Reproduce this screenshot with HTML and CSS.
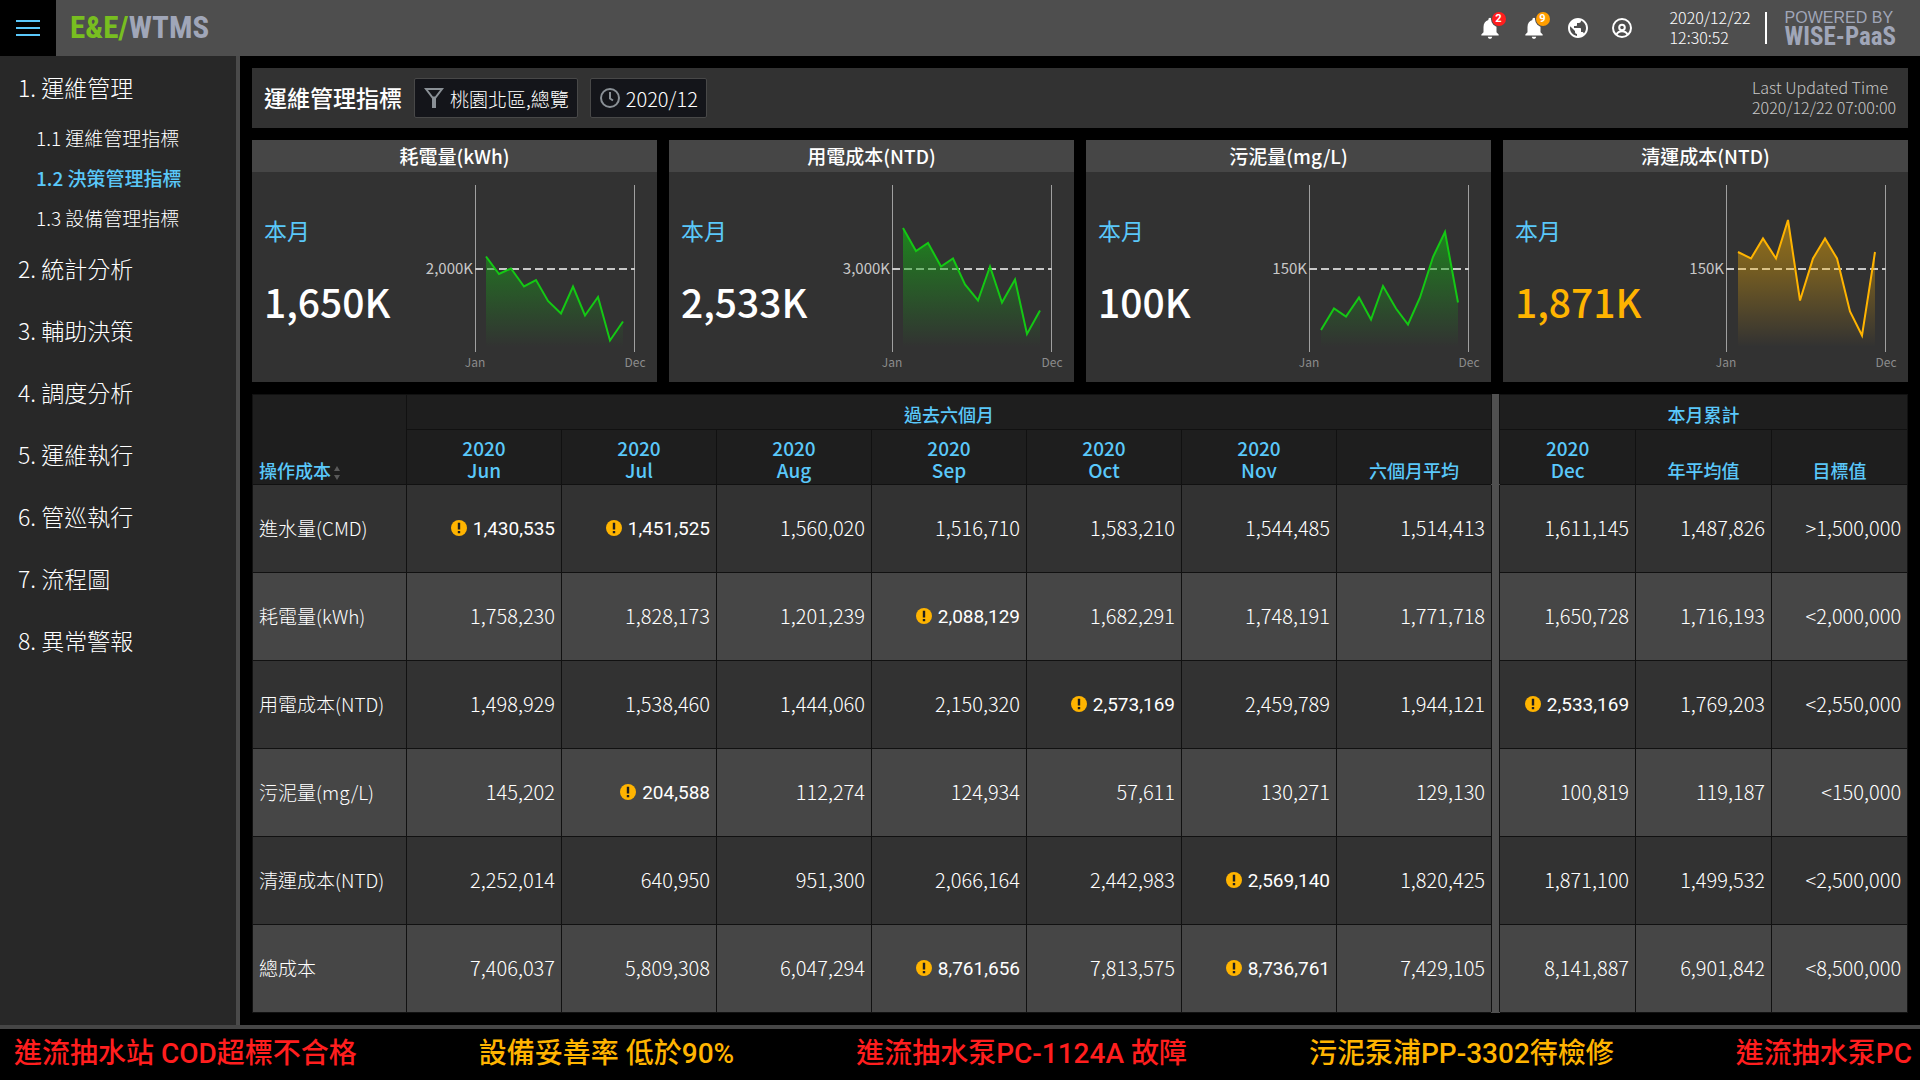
FILE: index.html
```html
<!DOCTYPE html>
<html lang="zh-Hant">
<head>
<meta charset="utf-8">
<meta name="viewport" content="width=device-width, initial-scale=1">
<title>E&amp;E/WTMS 運維管理指標</title>
<link rel="stylesheet" href="styles.css">
</head>
<body>
<svg class="defs" aria-hidden="true">
  <defs>
    <linearGradient id="fill-green" gradientUnits="userSpaceOnUse" x1="0" y1="50" x2="0" y2="175"><stop offset="0" stop-color="#17a317" stop-opacity=".8"/><stop offset=".3" stop-color="#17a317" stop-opacity=".52"/><stop offset="1" stop-color="#17a317" stop-opacity="0"/></linearGradient>
    <linearGradient id="fill-amber" gradientUnits="userSpaceOnUse" x1="0" y1="45" x2="0" y2="175"><stop offset="0" stop-color="#ffb400" stop-opacity=".5"/><stop offset=".4" stop-color="#ffb400" stop-opacity=".33"/><stop offset="1" stop-color="#ffb400" stop-opacity="0"/></linearGradient>
    <symbol id="bell" viewBox="0 0 24 24"><path d="M12 22c1.1 0 2-.9 2-2h-4c0 1.1.89 2 2 2zm6-6v-5c0-3.07-1.64-5.64-4.5-6.32V4c0-.83-.67-1.5-1.5-1.5s-1.5.67-1.5 1.5v.68C7.63 5.36 6 7.92 6 11v5l-2 2v1h16v-1l-2-2z"/></symbol>
    <symbol id="warn" viewBox="0 0 16 16"><circle cx="8" cy="8" r="8" fill="#ffb400"/><path d="M6.8 2.8h2.4v6.6H6.8zM6.8 11h2.4v2.2H6.8z" fill="#1e1e1e"/></symbol>
  </defs>
</svg>

<header class="topbar">
  <button class="menu-button" type="button" aria-label="Menu"><svg width="24" height="16" viewBox="0 0 24 16"><path d="M0 1h24M0 8h24M0 15h24" stroke="#5ac8fa" stroke-width="2"/></svg></button>
  <a class="brand" href="#"><span class="brand-green">E&amp;E/</span>WTMS</a>
  <div class="tools">
    <button class="tool" type="button" aria-label="Alarms"><svg width="26" height="26"><use href="#bell"/></svg><span class="badge badge-red">2</span></button>
    <button class="tool" type="button" aria-label="Warnings"><svg width="26" height="26"><use href="#bell"/></svg><span class="badge badge-amber">9</span></button>
    <button class="tool" type="button" aria-label="Language"><svg width="24" height="24" viewBox="0 0 24 24"><path d="M12 2C6.480 2 2 6.480 2 12s4.480 10 10 10 10-4.480 10-10S17.520 2 12 2zm-1 17.930c-3.950-.49-7-3.850-7-7.930 0-.62.08-1.210.21-1.790L9 15v1c0 1.100.9 2 2 2v1.930zm6.900-2.540c-.26-.81-1-1.390-1.900-1.390h-1v-3c0-.55-.45-1-1-1H8v-2h2c.55 0 1-.45 1-1V7h2c1.100 0 2-.9 2-2v-.41c2.930 1.190 5 4.060 5 7.410 0 2.080-.8 3.970-2.100 5.390z"/></svg></button>
    <button class="tool" type="button" aria-label="Account"><svg width="24" height="24" viewBox="0 0 24 24"><g fill="none" stroke="#fff" stroke-width="2"><circle cx="12" cy="12" r="9"/><circle cx="12" cy="11.500" r="2.800"/><path d="M6.500 18.500c1-2.300 3-3.300 5.500-3.300s4.500 1 5.500 3.300"/></g></svg></button>
  </div>
  <time class="clock">2020/12/22<br>12:30:52</time>
  <div class="powered"><span class="powered-by">POWERED BY</span><span class="powered-name">WISE-PaaS</span></div>
</header>

<div class="layout">
  <nav class="sidebar">
    <ul class="nav">
      <li><a href="#">1. 運維管理</a>
        <ul class="subnav">
          <li><a href="#">1.1 運維管理指標</a></li>
          <li><a class="active" href="#">1.2 決策管理指標</a></li>
          <li><a href="#">1.3 設備管理指標</a></li>
        </ul>
      </li>
      <li><a href="#">2. 統計分析</a></li>
      <li><a href="#">3. 輔助決策</a></li>
      <li><a href="#">4. 調度分析</a></li>
      <li><a href="#">5. 運維執行</a></li>
      <li><a href="#">6. 管巡執行</a></li>
      <li><a href="#">7. 流程圖</a></li>
      <li><a href="#">8. 異常警報</a></li>
    </ul>
  </nav>

  <main class="content">
    <section class="toolbar">
      <h1>運維管理指標</h1>
      <button class="filter" type="button"><svg width="20" height="20" viewBox="0 0 20 20"><path d="M2 1h16L11.500 9.500h-3z" fill="none" stroke="#8a9096" stroke-width="2"/><path d="M8 9h4v11H8z" fill="#8a9096"/></svg>桃園北區,總覽</button>
      <button class="filter filter-date" type="button"><svg width="20" height="20" viewBox="0 0 20 20" fill="none" stroke="#8a9096" stroke-width="2"><circle cx="10" cy="10" r="9"/><path d="M10 4v6.500l3 2"/></svg>2020/12</button>
      <p class="updated">Last Updated Time<br>2020/12/22 07:00:00</p>
    </section>

    <section class="cards">
      <article class="card">
        <h2>耗電量(kWh)</h2>
        <div class="card-body">
          <div class="figure"><span class="figure-label">本月</span><strong class="figure-value">1,650K</strong></div>
          <svg class="chart" viewBox="0 0 245 210">
            <path class="axis" d="M63.500 13v167M222.500 13v167"/><path class="limit" d="M63 97h160"/>
            <path fill="url(#fill-green)" d="M74 175V84.500L87 102L99 96.500L112 114.500L124 108L136 129L149 141.500L161 114.500L173 143.500L186 125L198 168.500L211 149.500V175z"/>
            <polyline class="line" points="74,84.500 87,102 99,96.500 112,114.500 124,108 136,129 149,141.500 161,114.500 173,143.500 186,125 198,168.500 211,149.500"/>
            <text class="limit-label" x="61" y="102">2,000K</text><text class="month" x="63" y="195">Jan</text><text class="month" x="223" y="195">Dec</text>
          </svg>
        </div>
      </article>
      <article class="card">
        <h2>用電成本(NTD)</h2>
        <div class="card-body">
          <div class="figure"><span class="figure-label">本月</span><strong class="figure-value">2,533K</strong></div>
          <svg class="chart" viewBox="0 0 245 210">
            <path class="axis" d="M63.500 13v167M222.500 13v167"/><path class="limit" d="M63 97h160"/>
            <path fill="url(#fill-green)" d="M74 175V56L87 79L99 71L112 94.500L124 86.500L136 112.500L149 128.500L161 94.500L173 130.500L186 107.500L198 162L211 138.500V175z"/>
            <polyline class="line" points="74,56 87,79 99,71 112,94.500 124,86.500 136,112.500 149,128.500 161,94.500 173,130.500 186,107.500 198,162 211,138.500"/>
            <text class="limit-label" x="61" y="102">3,000K</text><text class="month" x="63" y="195">Jan</text><text class="month" x="223" y="195">Dec</text>
          </svg>
        </div>
      </article>
      <article class="card">
        <h2>污泥量(mg/L)</h2>
        <div class="card-body">
          <div class="figure"><span class="figure-label">本月</span><strong class="figure-value">100K</strong></div>
          <svg class="chart" viewBox="0 0 245 210">
            <path class="axis" d="M63.500 13v167M222.500 13v167"/><path class="limit" d="M63 97h160"/>
            <path fill="url(#fill-green)" d="M75 175V158L88 136.500L100 144.500L113 125.500L125 147.500L137 114L150 136.500L162 152.500L174 125.500L187 85L199 60L212 130.500V175z"/>
            <polyline class="line" points="75,158 88,136.500 100,144.500 113,125.500 125,147.500 137,114 150,136.500 162,152.500 174,125.500 187,85 199,60 212,130.500"/>
            <text class="limit-label" x="61" y="102">150K</text><text class="month" x="63" y="195">Jan</text><text class="month" x="223" y="195">Dec</text>
          </svg>
        </div>
      </article>
      <article class="card card-warn">
        <h2>清運成本(NTD)</h2>
        <div class="card-body">
          <div class="figure"><span class="figure-label">本月</span><strong class="figure-value">1,871K</strong></div>
          <svg class="chart" viewBox="0 0 245 210">
            <path class="axis" d="M63.500 13v167M222.500 13v167"/><path class="limit" d="M63 97h160"/>
            <path fill="url(#fill-amber)" d="M75 175V80L88 86.500L100 66.500L113 86.500L125 48L137 128.500L150 86.500L162 66.500L174 86.500L187 139.500L199 163.500L212 80V175z"/>
            <polyline class="line" points="75,80 88,86.500 100,66.500 113,86.500 125,48 137,128.500 150,86.500 162,66.500 174,86.500 187,139.500 199,163.500 212,80"/>
            <text class="limit-label" x="61" y="102">150K</text><text class="month" x="63" y="195">Jan</text><text class="month" x="223" y="195">Dec</text>
          </svg>
        </div>
      </article>
    </section>

    <table class="costs">
      <colgroup><col class="col-name"><col class="col-month" span="7"><col class="col-gap"><col class="col-total" span="3"></colgroup>
      <thead>
        <tr class="groups"><th class="name" rowspan="2" scope="col">操作成本<svg class="sort" width="6" height="14" viewBox="0 0 6 14"><path d="M3 0l3 5H0zM3 14l3-5H0z" fill="#5a5a5a"/></svg></th><th colspan="7" scope="colgroup">過去六個月</th><td class="gap" rowspan="2"></td><th colspan="3" scope="colgroup">本月累計</th></tr>
        <tr class="months"><th class="date" scope="col">2020<br>Jun</th><th class="date" scope="col">2020<br>Jul</th><th class="date" scope="col">2020<br>Aug</th><th class="date" scope="col">2020<br>Sep</th><th class="date" scope="col">2020<br>Oct</th><th class="date" scope="col">2020<br>Nov</th><th scope="col">六個月平均</th><th class="date" scope="col">2020<br>Dec</th><th scope="col">年平均值</th><th scope="col">目標值</th></tr>
      </thead>
      <tbody>
        <tr class="row"><th scope="row">進水量(CMD)</th><td class="over"><svg class="warn"><use href="#warn"/></svg>1,430,535</td><td class="over"><svg class="warn"><use href="#warn"/></svg>1,451,525</td><td>1,560,020</td><td>1,516,710</td><td>1,583,210</td><td>1,544,485</td><td>1,514,413</td><td class="gap" rowspan="6"></td><td>1,611,145</td><td>1,487,826</td><td>&gt;1,500,000</td></tr>
        <tr class="row alt"><th scope="row">耗電量(kWh)</th><td>1,758,230</td><td>1,828,173</td><td>1,201,239</td><td class="over"><svg class="warn"><use href="#warn"/></svg>2,088,129</td><td>1,682,291</td><td>1,748,191</td><td>1,771,718</td><td>1,650,728</td><td>1,716,193</td><td>&lt;2,000,000</td></tr>
        <tr class="row"><th scope="row">用電成本(NTD)</th><td>1,498,929</td><td>1,538,460</td><td>1,444,060</td><td>2,150,320</td><td class="over"><svg class="warn"><use href="#warn"/></svg>2,573,169</td><td>2,459,789</td><td>1,944,121</td><td class="over"><svg class="warn"><use href="#warn"/></svg>2,533,169</td><td>1,769,203</td><td>&lt;2,550,000</td></tr>
        <tr class="row alt"><th scope="row">污泥量(mg/L)</th><td>145,202</td><td class="over"><svg class="warn"><use href="#warn"/></svg>204,588</td><td>112,274</td><td>124,934</td><td>57,611</td><td>130,271</td><td>129,130</td><td>100,819</td><td>119,187</td><td>&lt;150,000</td></tr>
        <tr class="row"><th scope="row">清運成本(NTD)</th><td>2,252,014</td><td>640,950</td><td>951,300</td><td>2,066,164</td><td>2,442,983</td><td class="over"><svg class="warn"><use href="#warn"/></svg>2,569,140</td><td>1,820,425</td><td>1,871,100</td><td>1,499,532</td><td>&lt;2,500,000</td></tr>
        <tr class="row alt"><th scope="row">總成本</th><td>7,406,037</td><td>5,809,308</td><td>6,047,294</td><td class="over"><svg class="warn"><use href="#warn"/></svg>8,761,656</td><td>7,813,575</td><td class="over"><svg class="warn"><use href="#warn"/></svg>8,736,761</td><td>7,429,105</td><td>8,141,887</td><td>6,901,842</td><td>&lt;8,500,000</td></tr>
      </tbody>
    </table>
  </main>
</div>

<footer class="ticker">
  <span class="alarm">進流抽水站 COD超標不合格</span>
  <span class="caution">設備妥善率 低於90%</span>
  <span class="alarm">進流抽水泵PC-1124A 故障</span>
  <span class="caution">污泥泵浦PP-3302待檢修</span>
  <span class="alarm">進流抽水泵PC</span>
</footer>
</body>
</html>
```
FILE: styles.css
```css
* { box-sizing: border-box; }
body {
  margin: 0;
  min-height: 100vh;
  display: flex;
  flex-direction: column;
  background: #000;
  color: #fff;
  font-family: "Noto Sans CJK TC", sans-serif;
  font-weight: 300;
}
a { color: inherit; text-decoration: none; }
button { font: inherit; color: inherit; border: 0; padding: 0; background: none; cursor: pointer; }
ul { list-style: none; margin: 0; padding: 0; }
svg { display: block; flex: none; }
.defs { position: absolute; width: 0; height: 0; }

.topbar { display: flex; align-items: center; height: 56px; padding-right: 24px; background: #4e4e4e; }
.menu-button { width: 56px; height: 56px; background: #000; display: flex; align-items: center; justify-content: center; }
.brand { margin-left: 14px; font: bold 31px/32px "Roboto Condensed", Roboto, sans-serif; color: #a0a6b8; }
.brand-green { color: #78be20; }
.tools { display: flex; margin-left: auto; }
.tool { position: relative; width: 44px; height: 44px; display: flex; align-items: center; justify-content: center; fill: #fff; }
.badge {
  position: absolute; left: 24px; top: 6px; width: 14px; height: 14px; border-radius: 50%;
  font: bold 11px/14px Roboto, sans-serif; text-align: center; box-shadow: 0 0 0 1px #4e4e4e;
}
.badge-red { background: #ff1e1e; }
.badge-amber { background: #ff9d00; }
.clock { margin-left: 26px; padding: 0 14px 2px 0; font-size: 16px; line-height: 20px; }
.powered { display: flex; flex-direction: column; padding-left: 20px; color: #a0a6b8; position: relative; }
.powered::before { content: ""; position: absolute; left: 0; top: 3px; width: 2px; height: 32px; background: #fff; }
.powered-by { font: 16px/18px "Liberation Sans", sans-serif; }
.powered-name { font: bold 25px/20px "Roboto Condensed", Roboto, sans-serif; }

.layout { flex: 1; display: flex; }
.sidebar { width: 240px; flex: none; background: #282828; border-right: 4px solid #4a4a4a; }
.nav > li > a { display: block; padding-left: 18px; font-size: 23px; line-height: 62px; }
.subnav { margin-bottom: -1px; }
.subnav a { display: block; padding-left: 36px; font-size: 19px; line-height: 40px; }
.subnav .active { color: #5ac8fa; font-weight: 500; }

.content { flex: 1; min-width: 0; padding: 12px; display: flex; flex-direction: column; gap: 12px; }
.toolbar { display: flex; align-items: center; height: 60px; padding: 0 12px; background: #323232; }
h1 { margin: 0 12px 0 0; padding-bottom: 2px; font-size: 23px; line-height: 32px; font-weight: 500; }
.filter { display: flex; align-items: center; gap: 6px; height: 40px; padding: 0 8px 0 9px; margin-right: 12px; background: #14151a; border: 1px solid #484848; border-radius: 2px; font-size: 19px; }
.filter-date { font-size: 20px; }
.updated { margin: 0 0 0 auto; padding-bottom: 2px; color: #c8c8c8; font-size: 16px; line-height: 20px; }

.cards { display: grid; grid-template-columns: repeat(4, 1fr); gap: 12px; }
.card { background: #323232; }
.card h2 { margin: 0; background: #464646; font-size: 19px; line-height: 32px; font-weight: 500; text-align: center; }
.card-body { display: flex; height: 210px; padding-left: 12px; }
.figure { flex: 1; display: flex; flex-direction: column; padding-top: 42px; white-space: nowrap; }
.figure-label { color: #5ac8fa; font-size: 23px; line-height: 32px; font-weight: 400; }
.figure-value { margin-top: 27px; font-size: 39px; line-height: 56px; font-weight: 500; }
.card-warn .figure-value { color: #ffb400; }
.chart { width: 245px; height: 210px; }
.axis { stroke: #a0a0a0; }
.limit { stroke: #c8c8c8; stroke-width: 2; stroke-dasharray: 8 4; }
.line { fill: none; stroke: #14c814; stroke-width: 2; }
.card-warn .line { stroke: #ffb400; }
.limit-label { fill: #c8c8c8; font-size: 15px; font-weight: 400; text-anchor: end; }
.month { fill: #8c8c8c; font-size: 12px; font-weight: 400; text-anchor: middle; }

.costs { width: 100%; table-layout: fixed; border-collapse: collapse; font-size: 20px; }
.col-name { width: 154px; }
.col-month { width: 155px; }
.col-gap { width: 8px; }
.col-total { width: 136px; }
.costs th, .costs td { border: 1px solid #111; padding: 0 6px 2px; font-weight: 300; text-align: right; }
.costs .groups th, .costs .months th { background: #1e1e1e; color: #5ac8fa; font-size: 18px; line-height: 22px; font-weight: 500; text-align: center; }
.costs .groups th { height: 35px; padding-top: 4px; padding-bottom: 0; }
.costs .months th { height: 55px; vertical-align: bottom; padding-bottom: 3px; }
.costs .months .date { font-size: 19px; }
.costs .groups .name { vertical-align: bottom; text-align: left; padding-bottom: 3px; }
.sort { display: inline-block; margin-left: 3px; vertical-align: -2px; }
.costs .gap { background: #505050; padding: 0; border-top-color: #505050; border-bottom-color: #505050; }
.row { height: 88px; background: #323232; }
.alt { background: #464646; }
.costs .row th { text-align: left; font-size: 19px; }
.costs .over { padding-bottom: 0; font-family: Roboto, sans-serif; font-size: 19px; font-weight: 400; }
.warn { display: inline-block; width: 16px; height: 16px; margin-right: 6px; vertical-align: -1px; }

.ticker {
  display: flex; justify-content: space-between; height: 55px; padding: 0 8px 0 14px; border-top: 4px solid #464646;
  overflow: hidden; white-space: nowrap; font-family: Roboto, "Noto Sans CJK TC", sans-serif; font-size: 28px; line-height: 49px; font-weight: 500;
}
.alarm { color: #ff1e1e; }
.caution { color: #ffb400; }
```
